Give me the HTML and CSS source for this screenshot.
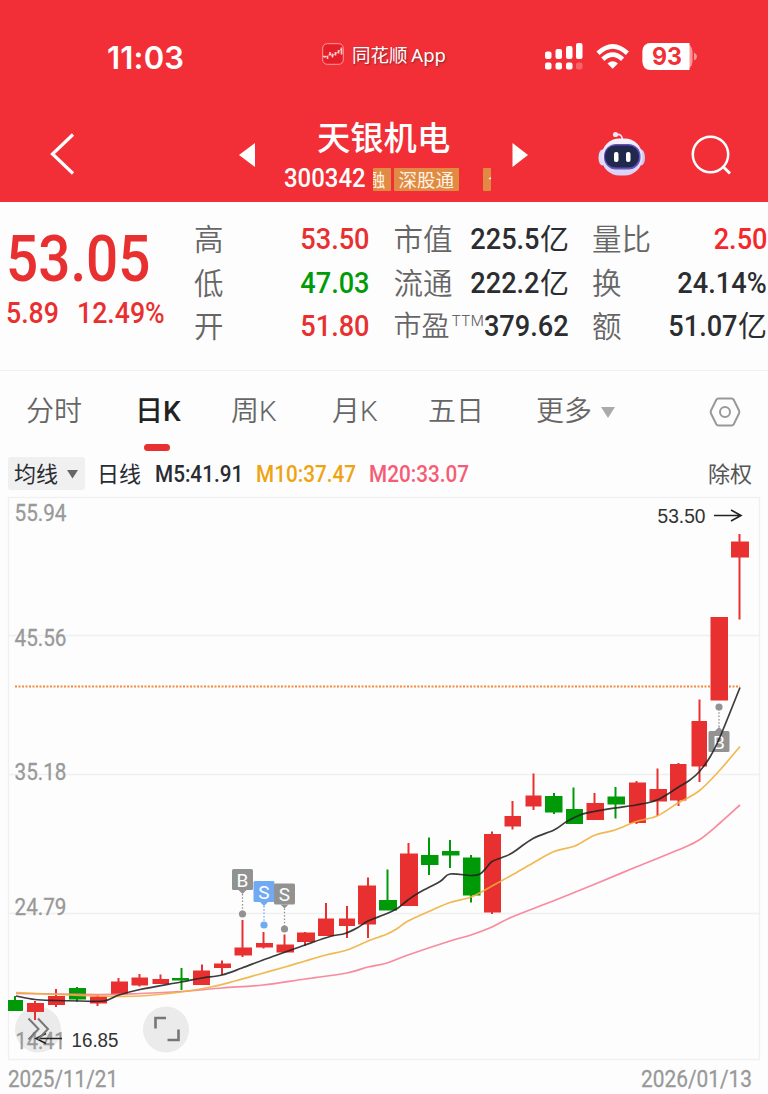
FILE: index.html
```html
<!DOCTYPE html>
<html lang="zh-CN">
<head>
<meta charset="utf-8">
<title>天银机电 300342</title>
<link rel="stylesheet" href="styles.css">
</head>
<body>
<header class="header">
  <div class="status">
    <div class="time">11:03</div>
    <div class="app">
      <svg width="22" height="22" viewBox="0 0 22 22"><rect x=".7" y=".7" width="20.6" height="20.6" rx="4.500" fill="#e51e29" stroke="#ff9a9d" stroke-width="1"/><path d="M1 13.500h3M5.500 13v3M8 9v3.500M10.500 10.500v4M13.500 9v3.500M16.500 7v3.500M19.500 4.500v7" stroke="#fff" stroke-width="1.700" opacity=".75"/><path d="M2 14h2l4-3 2.500 2 3-2.500 3-1.500 2.500-3" fill="none" stroke="#fff" stroke-width=".7" opacity=".7"/></svg>
      <span>同花顺 App</span>
    </div>
    <svg class="signal" width="152" height="28" viewBox="544 42 152 28">
      <g fill="#fff">
        <rect x="545" y="51.500" width="6.500" height="7.500" rx="2"/><rect x="555.500" y="49" width="6.500" height="10" rx="2"/><rect x="566" y="46" width="6.500" height="13" rx="2"/><rect x="576" y="43" width="6.500" height="16" rx="2"/>
        <rect x="545" y="62.500" width="6.500" height="7" rx="2"/><rect x="555.500" y="62.500" width="6.500" height="7" rx="2"/><rect x="566" y="62.500" width="6.500" height="7" rx="2"/><rect x="576" y="62.500" width="6.500" height="7" rx="2" opacity=".25"/>
        <path d="M607.500 63.500Q612.700 59 617.900 63.500L612.700 68.700Z"/>
        <rect x="642.500" y="43" width="50" height="27" rx="8.500" opacity=".5"/>
        <path d="M651 43H689.500V70H651Q642.500 70 642.500 61.500V51.500Q642.500 43 651 43Z"/>
        <path d="M694 52.500q3 1.500 3 4t-3 4z" opacity=".5"/>
      </g>
      <g fill="none" stroke="#fff" stroke-width="4.600"><path d="M598 53.200Q612.700 39.500 627.400 53.200"/><path d="M602.800 59.300Q612.700 50 622.600 59.300"/></g>
      <text class="battery" x="667" y="65" text-anchor="middle" textLength="30" lengthAdjust="spacingAndGlyphs">93</text>
    </svg>
  </div>
  <nav class="nav">
    <svg class="back" width="26" height="44" viewBox="0 0 26 44"><path d="M23 2.500L2.500 22l20.500 19.500" fill="none" stroke="#fff" stroke-width="3.200"/></svg>
    <svg width="17" height="26" viewBox="0 0 17 26"><path d="M0 13L16 1v24z" fill="#fff"/></svg>
    <div class="stock">
      <h1>天银机电</h1>
      <div class="code">
        <span class="num">300342</span>
        <span class="tag cut-left"><i>融</i></span><span class="tag full">深股通</span><span class="tag cut-right"><i>个</i></span>
      </div>
    </div>
    <svg width="17" height="26" viewBox="0 0 17 26"><path d="M16 13L.500 1v24z" fill="#fff"/></svg>
    <svg class="robot" width="48" height="46" viewBox="598 131 48 46">
      <defs><linearGradient id="shell" x2="0" y2="1"><stop stop-color="#f5f4ff"/><stop offset="1" stop-color="#d7d2f6"/></linearGradient></defs>
      <path d="M616 134.500q6.500-1 6.500 6" fill="none" stroke="#eee9fa" stroke-width="1.700"/><circle cx="615.500" cy="134.500" r="2.600" fill="#f4e5f1"/>
      <ellipse cx="602.500" cy="157.500" rx="4" ry="8" fill="#dedcf8"/><ellipse cx="641" cy="157.500" rx="4" ry="8" fill="#cbc9f5"/>
      <rect x="601.500" y="138.500" width="41" height="37" rx="18" fill="url(#shell)"/>
      <rect x="604" y="144" width="36.500" height="25.500" rx="12" fill="#6551bd"/><rect x="605" y="145.500" width="34" height="22" rx="10.500" fill="#20294b"/>
      <rect x="614" y="152" width="4.500" height="10" rx="2" fill="#fff"/><rect x="626" y="152" width="4.500" height="10" rx="2" fill="#fff"/>
    </svg>
    <svg width="41" height="41" viewBox="691 135 41 41"><g fill="none" stroke="#fff" stroke-width="2.500"><circle cx="710.500" cy="154.500" r="17.700"/><path d="M722.500 166L730 173.500" stroke-width="3"/></g></svg>
  </nav>
</header>

<section class="quote">
  <div class="price">
    <div class="last num">53.05</div>
    <div class="change"><span class="num">5.89</span><span class="num">12.49%</span></div>
  </div>
  <dl class="stats">
    <dt>高</dt><dd class="up"><b class="num">53.50</b></dd><dt>市值</dt><dd><b class="num">225.5</b>亿</dd><dt>量比</dt><dd class="up bright"><b class="num">2.50</b></dd>
    <dt>低</dt><dd class="down"><b class="num">47.03</b></dd><dt>流通</dt><dd><b class="num">222.2</b>亿</dd><dt>换</dt><dd><b class="num">24.14%</b></dd>
    <dt>开</dt><dd class="up"><b class="num">51.80</b></dd><dt class="pe">市盈<sup>TTM</sup></dt><dd><b class="num">379.62</b></dd><dt>额</dt><dd><b class="num">51.07</b>亿</dd>
  </dl>
</section>

<div class="tabs">
  <span>分时</span><span class="active">日K</span><span>周K</span><span>月K</span><span>五日</span>
  <span class="more">更多<svg width="14" height="12" viewBox="0 0 14 12"><path d="M0 0h14L7 11z" fill="#aaa"/></svg></span>
  <svg class="gear" width="32" height="30" viewBox="0 0 32 30"><path d="M9.500 1.500h13q1.500 0 2.200 1.300l5.300 10.700q.7 1.500 0 3l-5.300 10.700q-.7 1.300-2.200 1.300h-13q-1.500 0-2.200-1.300l-5.300-10.700q-.7-1.500 0-3l5.300-10.700q.7-1.300 2.200-1.300z" fill="none" stroke="#999" stroke-width="2"/><circle cx="16" cy="15" r="5" fill="none" stroke="#999" stroke-width="2"/></svg>
</div>

<div class="averages">
  <span class="chip">均线<svg width="11" height="9" viewBox="0 0 11 9"><path d="M0 0h11L5.500 8.500z" fill="#666"/></svg></span>
  <span class="period">日线</span>
  <span class="num m5">M5:41.91</span><span class="num m10">M10:37.47</span><span class="num m20">M20:33.07</span>
  <span class="adjust">除权</span>
</div>

<svg class="chart" width="768" height="602" viewBox="0 492 768 602">
  <g fill="none" stroke="#f0f0f0" stroke-width="1.300"><rect x="8.500" y="497.500" width="751" height="562"/><path d="M8 635.500h751M8 774.500h751M8 913.500h751"/></g>
  <g fill="#999" opacity=".32"><circle cx="38" cy="1029.500" r="23" opacity=".55"/><circle cx="166" cy="1029.500" r="23" opacity=".55"/></g>
  <g class="axis">
    <text x="14.500" y="521" textLength="52">55.94</text><text x="14.500" y="645.500" textLength="52">45.56</text><text x="14.500" y="780" textLength="52">35.18</text><text x="14.500" y="914.500" textLength="52">24.79</text><text x="15.500" y="1048.500" textLength="50">14.41</text>
    <text x="8" y="1086.500" textLength="110">2025/11/21</text><text x="641" y="1086.500" textLength="111">2026/01/13</text>
  </g>
  <path d="M15 686.500H740" stroke="#f58a3c" stroke-width="1.800" stroke-dasharray="2 1.500"/>
  <g id="candles"></g>
  <g id="markers"></g>
  <g id="lines"></g>
  <g class="extreme"><text x="657.500" y="523" textLength="48">53.50</text><text x="71.500" y="1047" textLength="47">16.85</text></g>
  <g fill="none" stroke="#222" stroke-width="1.600"><path d="M714 515.500h26M731 510l10 5.500-10 5.500"/><path d="M62 1038.500H37M46 1033.500l-10 5 10 5"/></g>
  <g fill="none" stroke="#777" stroke-width="2"><path d="M28.500 1018.500l10 10.500-10 10.500M38 1018.500l10 10.500-10 10.500"/><path d="M155.500 1028.500v-10.500h10.500M178.500 1029.500v10.500H167.500" stroke-width="2.600"/></g>
</svg>
<script src="chart.js"></script>
</body>
</html>
```
FILE: styles.css
```css
* { box-sizing: border-box; }
body { margin: 0; width: 768px; height: 1094px; overflow: hidden; background: #fdfdfd; color: #2c2d30; font-family: Roboto, "Noto Sans CJK SC", sans-serif; }
svg { display: block; flex: none; }
i, b { font-style: normal; font-weight: inherit; }
.num { display: inline-block; font-family: Roboto, sans-serif; font-weight: 500; white-space: nowrap; transform: scaleX(.885); transform-origin: left center; }

.header { height: 202px; background: #f22f37; color: #fff; }
.status { display: flex; height: 108px; padding-left: 107px; align-items: flex-start; }
.time { width: 215px; margin-top: 39px; font: 600 31px/38px Inter, sans-serif; letter-spacing: .2px; }
.app { display: flex; gap: 8px; width: 222px; margin-top: 43px; font: 400 18.500px/22px "Noto Sans", "Noto Sans CJK SC", sans-serif; text-shadow: 1px 1px 2px #8b252b; white-space: nowrap; word-spacing: -1px; }
.app span { margin-top: 1px; }
.signal { margin-top: 42px; overflow: visible; }
.battery { font: 700 24px Inter, sans-serif; fill: #f22f37; }
.nav { display: grid; grid-template-columns: 189px 45px 228px 86px 93px 41px; padding-left: 50px; align-items: start; }
.nav > svg { margin-top: 34px; }
.nav .back { margin-top: 24px; }
.nav > .robot { margin-top: 23px; }
.nav > svg:last-child { margin-top: 27px; }
.stock { width: 207px; }
.stock h1 { margin: 7px 0 0 33px; font: 500 33.300px/42px "Noto Sans CJK SC", sans-serif; white-space: nowrap; }
.code { display: flex; height: 24px; margin-top: 10px; align-items: center; }
.code .num { width: 89px; font-size: 26px; line-height: 22px; margin-top: -2px; transform: scaleX(.92); }
.tag { display: block; height: 23px; overflow: hidden; background: #e18a43; color: #fff3e4; border-radius: 1px; font: 400 18.500px/23px "Noto Sans CJK SC", sans-serif; text-align: center; white-space: nowrap; }
.tag i { display: block; }
.cut-left { width: 18px; }
.cut-left i { margin-left: -6px; text-align: left; }
.full { width: 66px; margin-left: 3px; }
.cut-right { width: 8px; margin-left: 24px; }
.cut-right i { margin-left: 5px; text-align: left; }

.quote { display: flex; height: 168px; padding-left: 6px; }
.price { width: 188px; color: #e93030; }
.last { margin-top: 26px; font-size: 64px; line-height: 64px; }
.change { display: flex; margin-top: 6px; font-size: 30px; line-height: 30px; }
.change .num { width: 71px; transform: scaleX(.89); }
.stats { display: grid; grid-template-columns: 87px 88.500px 110px 89.500px 98px 100px; grid-template-rows: repeat(3, 43.500px); margin: 14px 0 0; }
.stats dt { font: 350 29.500px/42px "Noto Sans CJK SC", sans-serif; color: #666; white-space: nowrap; }
.stats dt:nth-of-type(3n+2) { margin-left: 24px; }
.stats dt:nth-of-type(3n) { margin-left: 23px; }
.stats dd { display: flex; justify-content: flex-end; margin: 0; font: 400 29px/43px "Noto Sans CJK SC", sans-serif; white-space: nowrap; }
.stats .num { margin-top: 1px; font-size: 30px; transform-origin: right center; transform: scaleX(.905); }
.stats .up { color: #e93030; }
.stats .bright { color: #f5272c; }
.stats .down { color: #009b08; }
.stats .pe { display: flex; font-size: 28px; }
.pe sup { display: block; margin: -3px 0 0 2px; font: 300 15px/42px Inter, sans-serif; }

.tabs { display: grid; grid-template-columns: 109px 96px 101px 96px 108px 173px 32px; height: 87px; padding-left: 26px; border-top: 1px solid #f0f0f0; font: 350 28px/82px Roboto, "Noto Sans CJK SC", sans-serif; color: #666; }
.tabs span { white-space: nowrap; }
.tabs .active { display: grid; grid-template-rows: 73px 7px; color: #222; font-weight: 500; }
.tabs .active::after { content: ""; width: 26px; height: 7px; margin-left: 9px; border-radius: 4px; background: #e93030; }
.more { display: flex; gap: 9px; }
.more svg { margin-top: 36px; }
.gear { margin-top: 26px; }

.averages { display: flex; height: 35px; padding-left: 8px; font: 400 22px/31px "Noto Sans CJK SC", sans-serif; color: #292c32; }
.chip { display: flex; width: 77px; height: 33px; padding-left: 6px; gap: 9px; border-radius: 3px; background: #f0f0f0; }
.chip svg { margin-top: 13px; }
.period { width: 58px; padding-left: 12px; margin-right: 12px; white-space: nowrap; }
.averages .num { width: 101px; font-size: 23.500px; line-height: 34px; transform: scaleX(.882); }
.averages .m10 { width: 113px; color: #eea313; }
.averages .m20 { color: #f75c76; }
.averages .adjust { margin-left: auto; padding-right: 16px; color: #555; }
.chart { overflow: hidden; }
.axis { font: 400 24px Roboto, sans-serif; fill: #999; stroke: #999; stroke-width: .3px; }
.extreme { font: 400 20px "Liberation Sans", sans-serif; fill: #333; }
.marker-text { font: 400 19px Roboto, sans-serif; fill: #fff; }
```
FILE: chart.js
```js
// Each candle: wick x, body left, body right, body top, body bottom, wick top, wick bottom, direction.
const candles = [
[15,8,23,1000,1011,996,1011,0],[35,27,44,1003,1012,1001,1020,1],[56,48,65,996,1005,989,1007,1],[77,69,86,988,999.5,987,1001.5,0],
[97.5,90,107,996.5,1003.5,995,1006,1],[118.5,111,128,981.5,994.5,978,994,1],[139.5,131.5,148,977.5,985.5,974,986.5,1],[160.5,152.5,169,979,984,974.5,984,1],
[181.5,172,189,978,980.5,968,990,0],[202,193,210,970.5,985,964.5,985,1],[222,214,231,963.5,968,960.5,975,1],[242.5,234.5,252,947.5,955.5,920,957,1],
[263.5,256,273,943,947.5,932,948.5,1],[284.5,276.5,294,944.5,952.5,934.5,952,1],[305,297,315,932.5,942,932,946,1],[326,318,334,918.5,936,903,936,1],
[347,339,355,918.5,926,906,938,1],[368,358,376,885.5,924.5,877.5,938,1],[387.5,379,397,900,910.5,869.5,910,0],[408.5,400,418,853.5,906,843,906,1],
[429,421,438.5,855,865,837.5,875,0],[450,442,459.5,851,855.5,840,868,0],[471,463,480.5,857.5,895.5,855,902.5,0],[492,484,501,834,912.5,831.5,914,1],
[512.5,504.5,521,816,826.5,801,829.5,1],[533.5,525.5,541.5,795.5,806.5,773.5,810,1],[554,545,562.5,796,812.5,793,814,0],[573.5,566,583,809,824,787.5,824,0],
[594.5,586.5,604,803,820,793,820,1],[615.5,607.5,625,796.5,804.5,787,818.5,0],[636.5,629,646,782.5,823,781,824,1],[657.5,649.5,667,789,801.5,768.5,816,1],
[678.5,670,686.5,764,800.5,763,806,1],[699.5,691.5,707,721,766.5,699.5,782,1],[719,710.5,728,617,700.5,617,700,1],[739.5,731,749,541.5,557.5,534,619.5,1]];
document.getElementById('candles').innerHTML = candles.map(([x,l,r,t,b,wt,wb,up]) => {
  const c = up ? '#e83030' : '#009a08';
  return `<path d="M${x} ${wt}V${wb}" stroke="${c}" stroke-width="2"/><rect x="${l}" y="${t}" width="${r-l}" height="${b-t}" fill="${c}"/>`;
}).join('');

const averages = [
['#f77b91', [16,993.5,100,994.5,140,993.5,181,991.5,222,988,263,985,305,979,347,973,368,967,387,963,408,955,450,941,471,935,492,927,512,917,553,901,594,884.5,636,867,678,850,699,840,720,823,740,805]],
['#efaf3b', [16,992.5,60,994.5,100,996,140,996,181,992,211,987,235,981,260,974,285,967,305,961,326,955,347,950,368,941,387,934,398,928,408,921,430,911,450,902.5,471,897,492,886,512,875,533,863,554,851.5,575,846,594,835.5,615,830,636,821.5,657,816,678,803,699,791,720,770,740,746.5]],
['#222', [16,996,35,999.5,56,1000.5,80,1001,104,1001,119,995,140,989.5,181,982,202,978,222,975,242,968,263,960,284,952.5,305,945,330,936.5,345,933.5,357,928,368,921,387,913.5,398,908,408,900,420,892,440,881.5,450,874,471,875.5,480,874,487,867,492,861.5,502,857.5,512,853,533,838.5,554,830,566,822,580,815,594,811.5,615,808,636,805,657,800,678,787.5,690,780,699,772,710,757,720,737,740,687.5]]];
function curve(v) {
  const p = [];
  for (let i = 0; i < v.length; i += 2) p.push([v[i], v[i+1]]);
  let d = `M${p[0]}`;
  for (let i = 0; i < p.length-1; i++) {
    const a = p[Math.max(0,i-1)], b = p[i], c = p[i+1], e = p[Math.min(p.length-1,i+2)];
    d += `C${b[0]+(c[0]-a[0])/6} ${b[1]+(c[1]-a[1])/6} ${c[0]-(e[0]-b[0])/6} ${c[1]-(e[1]-b[1])/6} ${c}`;
  }
  return d;
}
document.getElementById('lines').innerHTML = averages.map(([c,v]) => `<path d="${curve(v)}" fill="none" stroke="${c}" stroke-width="1.7" opacity=".88"/>`).join('');

// Trade markers: centre x, box top, dot y, letter, colour.
const markers = [[242.5,869,914,'B','#929292'],[264,881,925,'S','#6faaf2'],[284.5,883.5,929,'S','#929292'],[719,731,707,'B','#929292']];
document.getElementById('markers').innerHTML = markers.map(([x,y,dot,s,c]) => {
  const below = dot < y, edge = below ? y : y+21, tip = below ? y-4 : y+25;
  return `<path d="M${x} ${tip}V${dot}" stroke="${c}" stroke-width="1.3" stroke-dasharray="1.5 1.8"/><circle cx="${x}" cy="${dot}" r="3.6" fill="${c}"/><rect x="${x-10.5}" y="${y}" width="21" height="21" rx="1.5" fill="${c}"/><path d="M${x-4} ${edge}L${x} ${tip}L${x+4} ${edge}Z" fill="${c}"/><text class="marker-text" x="${x}" y="${y+17.5}" text-anchor="middle">${s}</text>`;
}).join('');
document.querySelectorAll('.axis text, .extreme text').forEach(t => t.setAttribute('lengthAdjust', 'spacingAndGlyphs'));
```
